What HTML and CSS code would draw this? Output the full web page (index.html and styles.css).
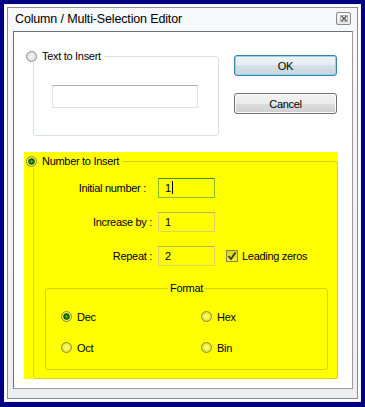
FILE: index.html
```html
<!DOCTYPE html>
<html lang="en">
<head>
  <meta charset="UTF-8">
  <title>Column / Multi-Selection Editor</title>
  <link rel="stylesheet" href="styles.css">
</head>
<body>

<div class="shot">
  <div class="window">
    <div class="titlebar">
      <span class="title">Column / Multi-Selection Editor</span>
      <span class="close">
        <svg width="8" height="7" viewBox="0 0 8 7">
          <path d="M0.5 0.5h7v6h-7z" fill="none" stroke="#b0b0b0" stroke-width="1"/>
          <path d="M1.5 1 L6.5 6 M6.5 1 L1.5 6" stroke="#5a5a5a" stroke-width="1.4"/>
        </svg>
      </span>
    </div>

    <div class="client">
      <div class="top-row">
        <div class="group text-group">
          <label class="caption"><span class="radio"></span>Text to Insert</label>
          <div class="field wide"></div>
        </div>
        <div class="buttons">
          <button class="btn default">OK</button>
          <button class="btn">Cancel</button>
        </div>
      </div>

      <div class="panel">
        <div class="group number-group">
          <label class="caption"><span class="radio on"></span>Number to Insert</label>

          <div class="rows">
            <span class="lbl first">Initial number :</span>
            <div class="field focus">1<span class="caret"></span></div>
            <span></span>

            <span class="lbl">Increase by :</span>
            <div class="field">1</div>
            <span></span>

            <span class="lbl">Repeat :</span>
            <div class="field">2</div>
            <label class="check-item">
              <span class="check">
                <svg width="10" height="10" viewBox="0 0 10 10">
                  <path d="M1.5 5 L4 8 L8.5 1.5" fill="none" stroke="#3c3c10" stroke-width="1.8"/>
                </svg>
              </span>Leading zeros
            </label>
          </div>

          <div class="group format-group">
            <span class="caption center">Format</span>
            <div class="options">
              <label class="opt"><span class="radio on"></span>Dec</label>
              <label class="opt"><span class="radio"></span>Hex</label>
              <label class="opt"><span class="radio"></span>Oct</label>
              <label class="opt"><span class="radio"></span>Bin</label>
            </div>
          </div>
        </div>
      </div>
    </div>
  </div>
</div>

</body>
</html>
```

FILE: styles.css
```css
html, body {
  margin: 0;
  padding: 0;
}
body {
  font-family: "Liberation Sans", Arial, sans-serif;
  font-size: 11px;
  letter-spacing: -0.3px;
  color: #000;
}
.shot {
  width: 365px;
  height: 407px;
  box-sizing: border-box;
  background-color: #000080;
  padding: 4px 5px 4px 5px;
}
.shot > .window {
  margin: 3px 0 0 2px;
}
.window {
  width: 351px;
  height: 392px;
  box-sizing: border-box;
  border: 1px solid #8c8c8c;
  background: linear-gradient(#f7f8f9, #eceeef);
  padding: 0 4px 0 5px;
  box-shadow: 0 0 0 2px #fdfdfd, 0 0 0 3px #f4f4f4;
}
.titlebar {
  height: 23px;
  display: flex;
  align-items: center;
  justify-content: space-between;
}
.title {
  font-size: 12.5px;
  letter-spacing: -0.15px;
  padding-left: 2px;
  margin-top: -1px;
}
.close {
  width: 13px;
  height: 11px;
  border: 1px solid #8a8a8a;
  border-radius: 2px;
  background: linear-gradient(#fbfbfb, #e6e6e6);
  display: flex;
  align-items: center;
  justify-content: center;
  margin-right: 2px;
  margin-top: -2px;
}
.client {
  height: 358px;
  box-sizing: border-box;
  border: 1px solid #6f6f6f;
  border-right-color: #9a9a9a;
  border-bottom-color: #9a9a9a;
  background-color: #fff;
}
.top-row {
  display: flex;
  align-items: flex-start;
  padding-left: 19px;
  gap: 15px;
}
.group {
  position: relative;
  box-sizing: border-box;
  border: 1px solid #d5dfe5;
  border-radius: 3px;
}
.text-group {
  width: 186px;
  height: 80px;
  margin-top: 24px;
  padding: 28px 0 0 18px;
}
.caption {
  position: absolute;
  top: -7px;
  left: -8px;
  display: flex;
  align-items: center;
  gap: 5px;
  height: 13px;
  line-height: 13px;
  padding-right: 3px;
  background-color: #fff;
}
.radio {
  width: 11px;
  height: 11px;
  box-sizing: border-box;
  border-radius: 50%;
  border: 1px solid #8f9090;
  background: radial-gradient(circle, #f6f6f6 0, #e2e2e2 55%, #c9c9c9 100%);
  flex: none;
}
.field {
  box-sizing: border-box;
  height: 20px;
  width: 57px;
  border: 1px solid #e0e3e8;
  border-top-color: #abadb3;
  padding-left: 6px;
  line-height: 18px;
}
.field.wide {
  width: 146px;
  height: 23px;
}
.buttons {
  display: flex;
  flex-direction: column;
  gap: 17px;
  margin-top: 23px;
}
.btn {
  width: 103px;
  height: 21px;
  box-sizing: border-box;
  border: 1px solid #707070;
  border-radius: 3px;
  background: linear-gradient(#f2f2f2 0, #ebebeb 50%, #dddddd 50%, #cfcfcf 100%);
  box-shadow: inset 0 0 0 1px #fbfbfb;
  font-family: inherit;
  font-size: 11px;
  letter-spacing: -0.3px;
  color: #000;
  padding: 0;
}
.btn.default {
  border-color: #3c7fb1;
  background: linear-gradient(#eef3f6 0, #e6edf1 50%, #d6e0e6 50%, #c8d4db 100%);
  box-shadow: inset 0 0 0 1px #8fd6f2;
}
.panel {
  width: 314px;
  height: 227px;
  margin: 16px 0 0 10px;
  box-sizing: border-box;
  padding: 9px 0 0 9px;
  background-color: #ffff00;
}
.panel .group {
  border-color: #d4d400;
}
.panel .caption {
  background-color: #ffff00;
}
.panel .radio {
  border-color: #8e8e3a;
  background: radial-gradient(circle, #ffff9a 0, #f0f040 50%, #c4c400 100%);
}
.radio.on,
.panel .radio.on {
  background: radial-gradient(circle, #5bd42a 0, #1b7d00 1.6px, #0d4f00 2.8px, #bcbc40 3.4px, #f4f460 60%, #c4c400 100%);
}
.number-group {
  width: 305px;
  height: 218px;
  padding: 16px 0 0 0;
}
.rows {
  display: grid;
  grid-template-columns: 118px 57px auto;
  column-gap: 6px;
  row-gap: 14px;
  align-items: center;
}
.lbl {
  text-align: right;
}
.lbl.first {
  padding-right: 6px;
}
.panel .field {
  border-color: #d8d860;
  border-top-color: #b8b850;
}
.panel .field.focus {
  border-color: #8cc020;
  border-top-color: #4e8a10;
}
.caret {
  display: inline-block;
  width: 1px;
  height: 13px;
  background-color: #000;
  vertical-align: -2px;
  margin-left: 1px;
}
.check-item {
  display: flex;
  align-items: center;
  gap: 4px;
  margin-left: 5px;
}
.check {
  width: 12px;
  height: 12px;
  box-sizing: border-box;
  border: 1px solid #8a8a30;
  background: linear-gradient(#d6d620, #ecec40);
  display: flex;
  align-items: center;
  justify-content: center;
}
.format-group {
  width: 283px;
  height: 82px;
  margin: 22px 0 0 11px;
  padding: 21px 0 0 15px;
}
.caption.center {
  left: 0;
  right: 0;
  margin: 0 auto;
  width: max-content;
  padding: 0 2px;
}
.options {
  display: grid;
  grid-template-columns: 140px auto;
  grid-auto-rows: 13px;
  row-gap: 18px;
}
.opt {
  display: flex;
  align-items: center;
  gap: 5px;
}
```
